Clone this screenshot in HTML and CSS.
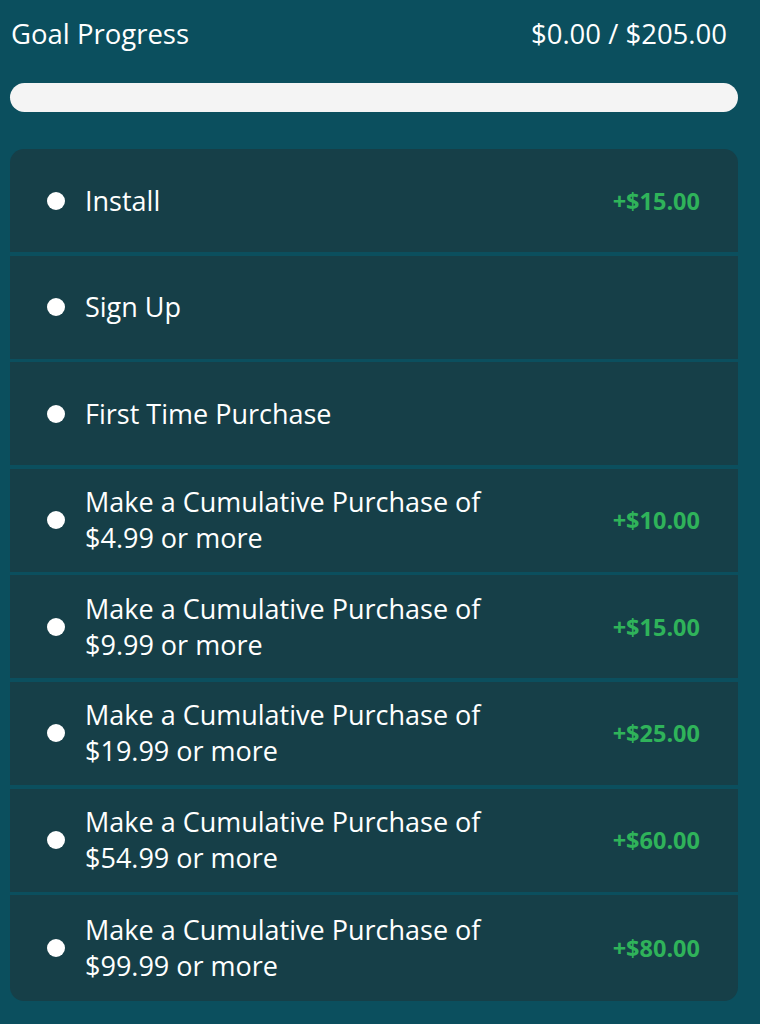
FILE: index.html
```html
<!DOCTYPE html>
<html>
<head>
<meta charset="utf-8">
<link rel="stylesheet" href="styles.css">
</head>
<body>
<div class="page">
  <div class="header">
    <span class="title">Goal Progress</span>
    <span class="total">$0.00 / $205.00</span>
  </div>
  <div class="bar"><div class="fill" style="width:0%"></div></div>
  <div class="list">
    <div class="row"><span class="dot"></span><span class="label">Install</span><span class="amount">+$15.00</span></div>
    <div class="row"><span class="dot"></span><span class="label">Sign Up</span><span class="amount"></span></div>
    <div class="row"><span class="dot"></span><span class="label">First Time Purchase</span><span class="amount"></span></div>
    <div class="row"><span class="dot"></span><span class="label">Make a Cumulative Purchase of<br>$4.99 or more</span><span class="amount">+$10.00</span></div>
    <div class="row"><span class="dot"></span><span class="label">Make a Cumulative Purchase of<br>$9.99 or more</span><span class="amount">+$15.00</span></div>
    <div class="row"><span class="dot"></span><span class="label">Make a Cumulative Purchase of<br>$19.99 or more</span><span class="amount">+$25.00</span></div>
    <div class="row"><span class="dot"></span><span class="label">Make a Cumulative Purchase of<br>$54.99 or more</span><span class="amount">+$60.00</span></div>
    <div class="row"><span class="dot"></span><span class="label">Make a Cumulative Purchase of<br>$99.99 or more</span><span class="amount">+$80.00</span></div>
  </div>
</div>
</body>
</html>
```
FILE: styles.css
```css
html, body {
  margin: 0;
  padding: 0;
  background: #0b4f5e;
}
body {
  font-family: "Open Sans", Lato, sans-serif;
  color: #ffffff;
}
.page {
  padding: 0 22px 0 10px;
  width: 728px;
}
.header {
  display: flex;
  justify-content: space-between;
  align-items: center;
  padding: 0 11px 16px 1px;
  height: 83px;
  box-sizing: border-box;
}
.title, .total {
  font-size: 27.5px;
  font-weight: 400;
  line-height: 36px;
}
.bar {
  height: 29px;
  border-radius: 15px;
  background: #f4f4f4;
  overflow: hidden;
}
.fill {
  height: 100%;
  background: #2fb35a;
}
.list {
  margin-top: 37px;
  border-radius: 14px;
  overflow: hidden;
  display: flex;
  flex-direction: column;
  gap: 3.6px;
}
.row {
  background: #163f48;
  height: 103px;
  display: flex;
  align-items: center;
  padding: 0 38px 0 37px;
}
.row:last-child {
  height: 106px;
}
.dot {
  width: 18px;
  height: 18px;
  border-radius: 50%;
  background: #ffffff;
  flex: none;
}
.label {
  margin-left: 20px;
  font-size: 27px;
  line-height: 36px;
  flex: 1;
}
.amount {
  font-size: 23.5px;
  font-weight: 700;
  color: #2fb35a;
}
```
